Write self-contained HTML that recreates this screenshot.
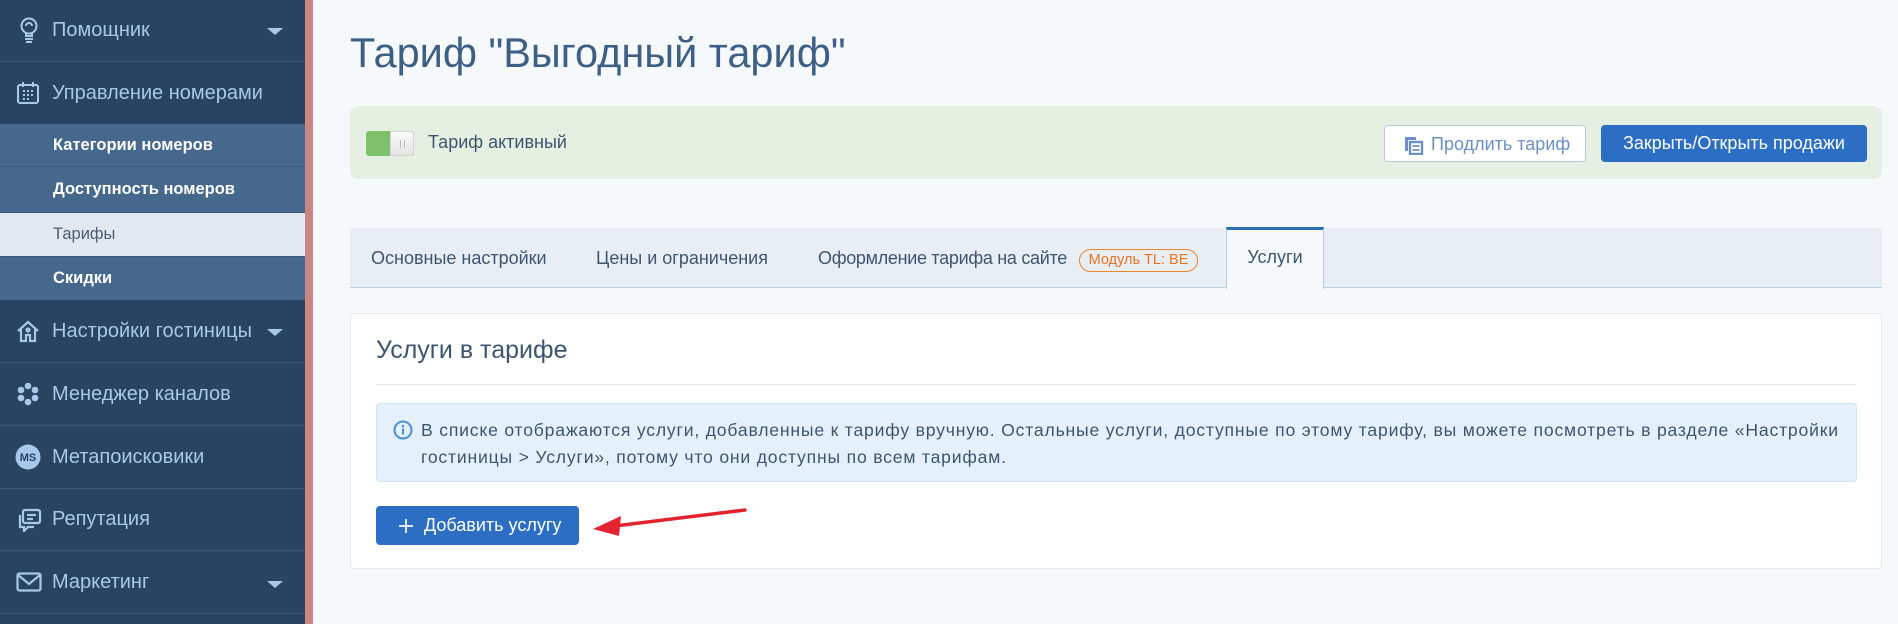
<!DOCTYPE html>
<html><head><meta charset="utf-8"><style>
*{box-sizing:border-box;margin:0;padding:0}
body{width:1898px;height:624px;overflow:hidden;background:#f5f9fc;font-family:"Liberation Sans",sans-serif;position:relative}
.sb{position:absolute;left:0;top:0;width:305px;height:624px;background:#284461}
.stripe{position:absolute;left:305px;top:0;width:8px;height:624px;background:#c98682}
.it{position:absolute;left:0;width:305px;border-bottom:1px solid #3c5878;color:#a8c8ea;font-size:20px;display:flex;align-items:center;padding-left:52px}
.it svg{position:absolute;left:16px}
.sub{position:absolute;left:0;width:305px;background:#46688c;border-bottom:1px solid #385a7e;color:#fff;font-weight:bold;font-size:16.5px;display:flex;align-items:center;padding-left:53px}
.sub.act{background:#e2e8ef;color:#4a5d72;font-weight:normal}
.car{position:absolute;right:22px;width:0;height:0;border-left:8px solid transparent;border-right:8px solid transparent;border-top:7px solid #a8c8ea}
.abs{position:absolute}
</style></head><body>
<div class="sb">
 <div class="it" style="top:0;height:62px">
  <svg width="22" height="26" viewBox="0 0 22 26" style="top:17px;left:18px" fill="none" stroke="#a8c8ea" stroke-width="2"><circle cx="11" cy="9" r="7.5"/><path d="M8 9a3 3 0 0 1 6 0M7 19h8M7 22h8M8 25h6M8 16v3M14 16v3"/></svg>
  Помощник<span class="car" style="top:28px"></span></div>
 <div class="it" style="top:62px;height:62px;border-bottom:none">
  <svg width="24" height="24" viewBox="0 0 24 24" style="top:19px" fill="none" stroke="#a8c8ea" stroke-width="2"><rect x="2" y="4" width="20" height="18" rx="2"/><path d="M7 1v5M17 1v5"/><g fill="#a8c8ea" stroke="none"><rect x="7" y="9" width="2" height="2"/><rect x="11" y="9" width="2" height="2"/><rect x="15" y="9" width="2" height="2"/><rect x="7" y="13" width="2" height="2"/><rect x="11" y="13" width="2" height="2"/><rect x="15" y="13" width="2" height="2"/><rect x="7" y="17" width="2" height="2"/><rect x="11" y="17" width="2" height="2"/></g></svg>
  Управление номерами</div>
 <div class="sub" style="top:124px;height:43px">Категории номеров</div>
 <div class="sub" style="top:167px;height:46px">Доступность номеров</div>
 <div class="sub act" style="top:213px;height:44px">Тарифы</div>
 <div class="sub" style="top:257px;height:43px;border-bottom:none">Скидки</div>
 <div class="it" style="top:300px;height:63px">
  <svg width="24" height="24" viewBox="0 0 24 24" style="top:19px" fill="none" stroke="#a8c8ea" stroke-width="2.2"><path d="M2 12L12 3l10 9M5 10v12h5v-6h4v6h5V10"/><circle cx="12" cy="11" r="1.5"/></svg>
  Настройки гостиницы<span class="car" style="top:29px"></span></div>
 <div class="it" style="top:363px;height:63px">
  <svg width="24" height="24" viewBox="0 0 24 24" style="top:19px" fill="#a8c8ea"><circle cx="12" cy="4" r="3.3"/><circle cx="12" cy="20" r="3.3"/><circle cx="5" cy="8" r="3.3"/><circle cx="19" cy="8" r="3.3"/><circle cx="5" cy="16" r="3.3"/><circle cx="19" cy="16" r="3.3"/><circle cx="12" cy="12" r="2.5" fill="#284461"/></svg>
  Менеджер каналов</div>
 <div class="it" style="top:426px;height:63px">
  <svg width="26" height="26" viewBox="0 0 26 26" style="top:18px;left:15px"><circle cx="13" cy="13" r="12.5" fill="#a8c8ea"/><text x="13" y="17" text-anchor="middle" font-size="11" font-weight="bold" fill="#284461" font-family="Liberation Sans">MS</text></svg>
  Метапоисковики</div>
 <div class="it" style="top:489px;height:62px">
  <svg width="26" height="24" viewBox="0 0 26 24" style="top:19px" fill="none" stroke="#a8c8ea" stroke-width="2.2"><rect x="7" y="2" width="17" height="13" rx="2"/><path d="M11 7h9M11 11h6M4 7v12h4v4l4-4h6"/></svg>
  Репутация</div>
 <div class="it" style="top:551px;height:63px">
  <svg width="26" height="20" viewBox="0 0 26 20" style="top:21px" fill="none" stroke="#a8c8ea" stroke-width="2.2"><rect x="1.5" y="1.5" width="23" height="17" rx="2"/><path d="M2 3l11 9 11-9"/></svg>
  Маркетинг<span class="car" style="top:30px"></span></div>
</div>
<div class="stripe"></div>

<div class="abs" style="left:350px;top:29px;font-size:41.5px;color:#3d5f85;white-space:nowrap">Тариф "Выгодный тариф"</div>

<div class="abs" style="left:350px;top:106px;width:1532px;height:73px;background:#e5f0e3;border-radius:8px"></div>
<div class="abs" style="left:366px;top:131px;width:48px;height:25px;border-radius:3px;background:#7fc06a;overflow:hidden"><div style="position:absolute;left:24px;top:0;width:24px;height:25px;background:linear-gradient(#fafafa,#e4e4e4);border:1px solid #d4d4d4;border-radius:0 3px 3px 0"><div style="position:absolute;left:9px;top:8px;width:5px;height:8px;border-left:1px solid #bbb;border-right:1px solid #bbb"></div></div></div>
<div class="abs" style="left:428px;top:132px;font-size:18px;color:#3d5570">Тариф активный</div>
<div class="abs" style="left:1384px;top:125px;width:202px;height:37px;background:#fff;border:1px solid #b9c9da;border-radius:4px;color:#6d8fc4;font-size:18px;padding:8px 0 0 46px;white-space:nowrap">Продлить тариф
 <svg class="abs" style="left:18px;top:9px" width="22" height="20" viewBox="0 0 22 20"><path d="M2 2h11v3H5v11H2z" fill="#6d8fc4"/><rect x="7" y="7" width="12" height="12" fill="none" stroke="#6d8fc4" stroke-width="2.4"/><path d="M9.5 11h7M9.5 15h7" stroke="#6d8fc4" stroke-width="1.8"/></svg></div>
<div class="abs" style="left:1601px;top:125px;width:266px;height:37px;background:#2b6ec3;border-radius:4px;color:#fff;font-size:18px;text-align:center;line-height:37px;white-space:nowrap">Закрыть/Открыть продажи</div>

<div class="abs" style="left:350px;top:228px;width:1532px;height:60px;background:#e9eef5;border-bottom:1px solid #b8cde0"></div>
<div class="abs" style="left:371px;top:248px;font-size:18px;color:#3d5570;white-space:nowrap">Основные настройки</div>
<div class="abs" style="left:596px;top:248px;font-size:18px;color:#3d5570;white-space:nowrap">Цены и ограничения</div>
<div class="abs" style="left:818px;top:248px;font-size:18px;color:#3d5570;white-space:nowrap;letter-spacing:-0.3px">Оформление тарифа на сайте</div>
<div class="abs" style="left:1079px;top:249px;width:119px;height:23px;border:1.5px solid #e8872e;border-radius:12px;color:#e8731e;font-size:14.5px;text-align:center;line-height:20px;white-space:nowrap">Модуль TL: BE</div>
<div class="abs" style="left:1226px;top:227px;width:98px;height:62px;background:#f5f9fc;border:1px solid #b8cde0;border-top:3px solid #2f6fb5;border-bottom:none;font-size:18px;color:#3d5570;text-align:center;line-height:54px">Услуги</div>

<div class="abs" style="left:350px;top:313px;width:1532px;height:256px;background:#fff;border:1px solid #e2e8ee;border-radius:4px"></div>
<div class="abs" style="left:376px;top:336px;font-size:25px;color:#3d5570;white-space:nowrap">Услуги в тарифе</div>
<div class="abs" style="left:376px;top:384px;width:1480px;height:1px;background:#e1e6ec"></div>
<div class="abs" style="left:376px;top:403px;width:1481px;height:79px;background:#e4f1fc;border:1px solid #cfe3f4;border-radius:4px"></div>
<svg class="abs" style="left:393px;top:420px" width="20" height="20" viewBox="0 0 20 20"><circle cx="10" cy="10" r="8.5" fill="none" stroke="#4d8fd0" stroke-width="2"/><circle cx="10" cy="6" r="1.3" fill="#4d8fd0"/><path d="M10 8.5v6" stroke="#4d8fd0" stroke-width="2"/></svg>
<div class="abs" style="left:421px;top:417px;font-size:17.6px;color:#3d5570;line-height:27px;white-space:nowrap;letter-spacing:0.8px">В списке отображаются услуги, добавленные к тарифу вручную. Остальные услуги, доступные по этому тарифу, вы можете посмотреть в разделе «Настройки<br>гостиницы &gt; Услуги», потому что они доступны по всем тарифам.</div>
<div class="abs" style="left:376px;top:506px;width:203px;height:39px;background:#2b6ec3;border-radius:4px;color:#fff;font-size:18px;line-height:39px;padding-left:48px;white-space:nowrap">Добавить услугу
 <svg class="abs" style="left:22px;top:12px" width="16" height="16" viewBox="0 0 16 16"><path d="M8 1v14M1 8h14" stroke="#dce8f6" stroke-width="2"/></svg></div>
<svg class="abs" style="left:585px;top:500px" width="170" height="40" viewBox="0 0 170 40"><path d="M160 10L30 26" stroke="#e32330" stroke-width="3.5" stroke-linecap="round"/><path d="M8 29L36 16L34 36Z" fill="#e32330"/></svg>
</body></html>
